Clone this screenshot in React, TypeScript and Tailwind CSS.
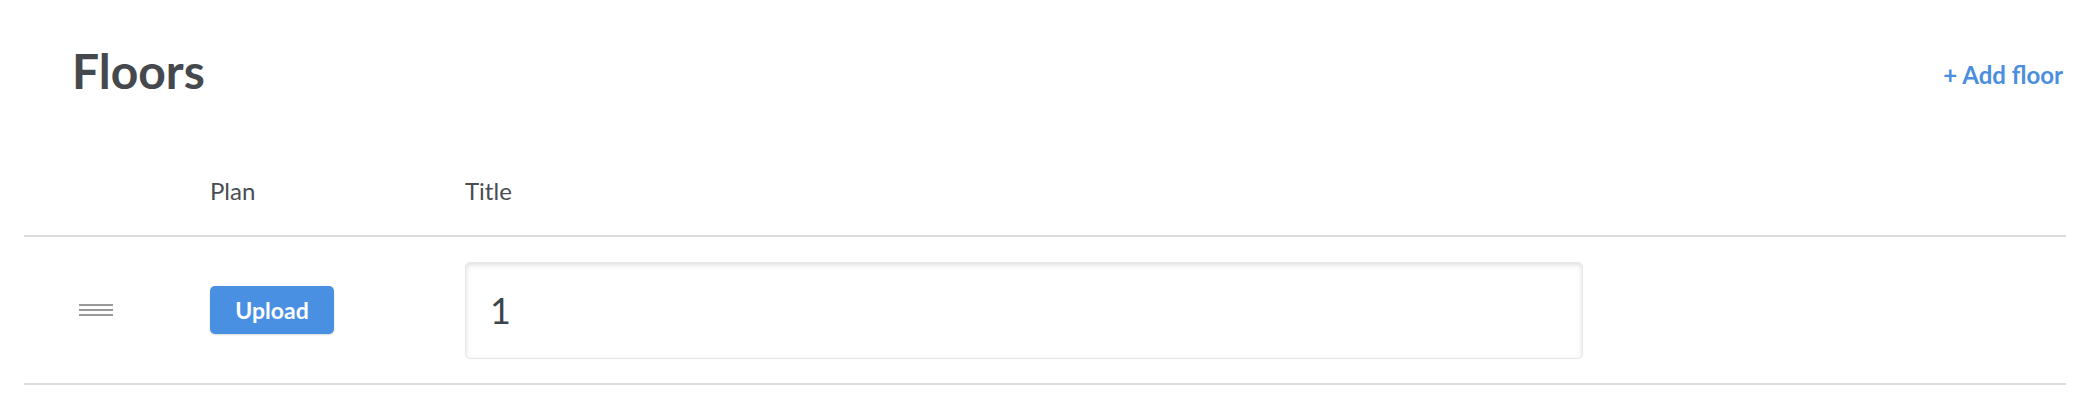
import React from "react";

export default function App() {
  return (
    <div
      className="w-[2097px] h-[402px] bg-white pl-[24px] pr-[31px]"
      style={{ fontFamily: "Lato, 'Open Sans', sans-serif" }}
    >
      <div className="flex justify-between items-start pt-[47px] pl-[48px] pr-[3px]">
        <h1 className="text-[48px] leading-none font-bold text-[#45494e]">Floors</h1>
        <a className="mt-[16px] text-[24px] leading-none font-bold text-[#4a8ee0] cursor-pointer">
          + Add floor
        </a>
      </div>

      <div className="flex items-start h-[140px] pt-[84px] text-[24px] leading-none text-[#4a4d52]">
        <div className="w-[186px]" />
        <div className="w-[255px]">Plan</div>
        <div>Title</div>
      </div>

      <div className="h-[2px] bg-[#dcdcdc]" />

      <div className="flex items-center h-[146px]">
        <div className="w-[186px] pl-[55px]">
          <div className="flex flex-col gap-[3px] w-[34px]">
            <div className="h-[2px] bg-[#999999]" />
            <div className="h-[2px] bg-[#999999]" />
            <div className="h-[2px] bg-[#999999]" />
          </div>
        </div>
        <div className="w-[255px]">
          <button className="w-[124px] h-[48px] rounded-[5px] bg-[#4a90e2] text-white text-[23px] font-bold leading-none shadow-[0_1px_2px_rgba(0,0,0,0.15)]">
            Upload
          </button>
        </div>
        <div>
          <input
            readOnly
            defaultValue="1"
            className="w-[1118px] h-[97px] rounded-[5px] border border-[#e6e6e6] bg-white pl-[24px] text-[36px] text-[#3d434a] shadow-[inset_0_2px_5px_rgba(0,0,0,0.12)] outline-none"
            style={{ fontFamily: "Lato, 'Open Sans', sans-serif" }}
          />
        </div>
      </div>

      <div className="h-[2px] bg-[#dcdcdc]" />
    </div>
  );
}
